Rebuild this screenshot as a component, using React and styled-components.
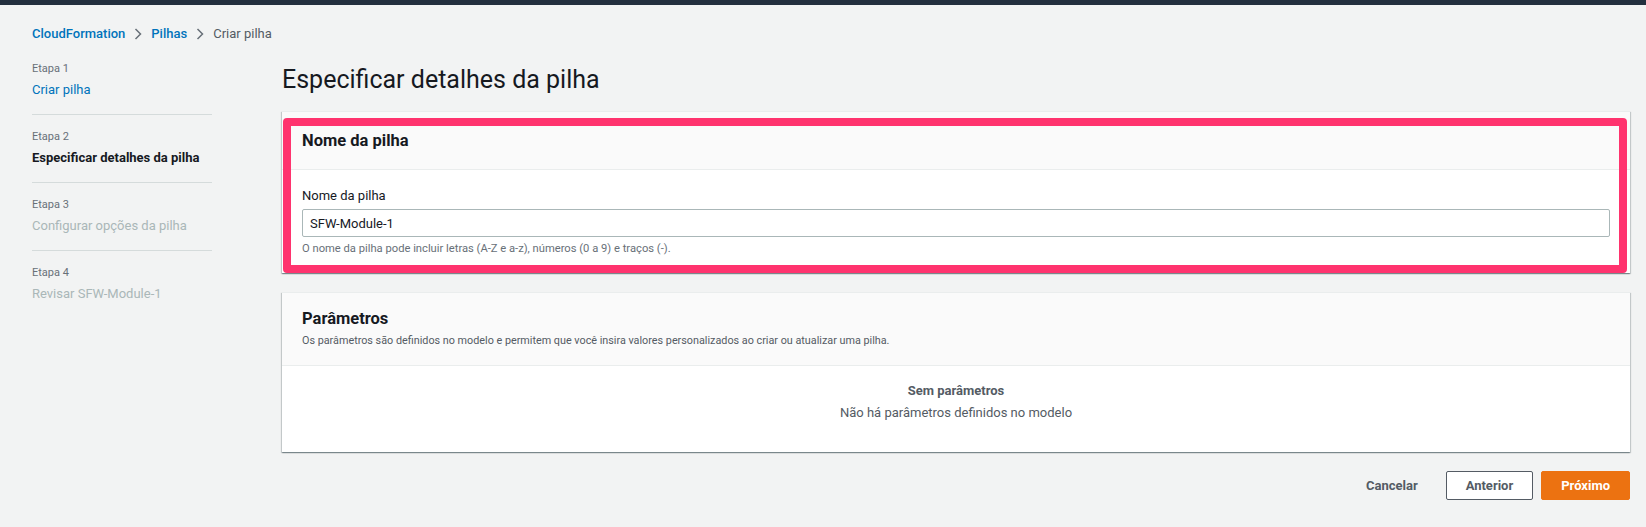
import React from "react"
import styled, { createGlobalStyle } from "styled-components"

const COLORS = {
  page: "#f2f3f3",
  ink: "#16191f",
  muted: "#687078",
  faded: "#aab7b8",
  link: "#0073bb",
  line: "#eaeded",
  navLine: "#d5dbdb",
  header: "#fafafa",
  orange: "#ec7211",
  grey: "#545b64",
  highlight: "#ff336e",
}

const GlobalStyle = createGlobalStyle`
  html, body {
    margin: 0;
    padding: 0;
    background: ${COLORS.page};
  }
  body {
    font-family: Roboto, "Liberation Sans", Arial, sans-serif;
    color: ${COLORS.ink};
    -webkit-font-smoothing: antialiased;
  }
  * { box-sizing: border-box; }
`

const TopBar = styled.div`
  height: 5px;
  background: #232f3e;
`

const Page = styled.div`
  padding: 19px 16px 20px 32px;
`

const Breadcrumbs = styled.nav`
  display: flex;
  align-items: center;
  height: 20px;
  font-size: 13px;
  line-height: 20px;
`

const Crumb = styled.span`
  color: ${({ current }) => (current ? COLORS.grey : COLORS.link)};
  font-weight: ${({ current }) => (current ? 400 : 500)};
`

const Chevron = styled.svg`
  width: 8px;
  height: 12px;
  margin: 0 9px;
  display: block;
`

const Layout = styled.div`
  display: grid;
  grid-template-columns: 180px 1fr;
  column-gap: 70px;
`

const StepNav = styled.ol`
  list-style: none;
  margin: 0;
  padding: 3px 0 0;
`

const Step = styled.li`
  padding: 14px 0;
  border-bottom: ${({ last }) => (last ? "none" : `1px solid ${COLORS.navLine}`)};
`

const StepLabel = styled.div`
  font-size: 11px;
  line-height: 16px;
  color: ${COLORS.muted};
`

const StepTitle = styled.div`
  margin-top: 3px;
  font-size: 13px;
  line-height: 20px;
  ${({ state }) =>
    state === "done"
      ? `color: ${COLORS.link};`
      : state === "active"
      ? `color: ${COLORS.ink}; font-weight: 700;`
      : `color: ${COLORS.faded};`}
`

const Main = styled.main`
  min-width: 0;
`

const Title = styled.h1`
  margin: 20px 0 15px;
  font-size: 25px;
  line-height: 32px;
  font-weight: 400;
  color: ${COLORS.ink};
`

const CardWrap = styled.div`
  position: relative;
  margin-bottom: 19px;
`

const Card = styled.section`
  background: #fff;
  border-top: 1px solid ${COLORS.line};
  box-shadow: 0 1px 1px 0 rgba(0, 28, 36, 0.3),
    1px 1px 1px 0 rgba(0, 28, 36, 0.15), -1px 1px 1px 0 rgba(0, 28, 36, 0.15);
`

const CardHeader = styled.header`
  background: ${COLORS.header};
  border-bottom: 1px solid ${COLORS.line};
  padding: ${({ compact }) => (compact ? "16px 20px" : "19px 20px 18px")};
`

const CardTitle = styled.h2`
  margin: 0;
  font-size: 16.5px;
  line-height: 20px;
  font-weight: 700;
`

const CardDesc = styled.p`
  margin: 4px 0 0;
  font-size: 10.8px;
  line-height: 16px;
  color: ${COLORS.grey};
`

const CardBody = styled.div`
  padding: 16px 20px 16px;
`

const Label = styled.label`
  display: block;
  font-size: 13px;
  line-height: 20px;
  margin-bottom: 3px;
`

const Input = styled.input`
  display: block;
  width: 100%;
  height: 28px;
  padding: 0 7px;
  border: 1px solid ${COLORS.faded};
  border-radius: 2px;
  font: inherit;
  font-size: 13px;
  color: ${COLORS.ink};
  background: #fff;
  outline: none;
`

const Hint = styled.div`
  margin-top: 4px;
  font-size: 11.2px;
  line-height: 16px;
  color: ${COLORS.muted};
`

const Highlight = styled.div`
  position: absolute;
  left: 1px;
  top: 7px;
  right: 3px;
  bottom: 0;
  border: 8px solid ${COLORS.highlight};
  border-radius: 4px;
  pointer-events: none;
`

const Empty = styled.div`
  padding: 15px 20px 29px;
  text-align: center;
  font-size: 13px;
  line-height: 20px;
  color: ${COLORS.grey};

  b {
    display: block;
    margin-bottom: 2px;
  }
`

const Actions = styled.div`
  display: flex;
  justify-content: flex-end;
  gap: 8px;
`

const Button = styled.button`
  height: 29px;
  padding: 0 19px;
  border-radius: 2px;
  font-family: inherit;
  font-size: 13px;
  font-weight: 700;
  cursor: pointer;
  ${({ variant }) =>
    variant === "primary"
      ? `background: ${COLORS.orange}; border: 1px solid ${COLORS.orange}; color: #fff;`
      : variant === "link"
      ? `background: transparent; border: 1px solid transparent; color: ${COLORS.grey};`
      : `background: #fff; border: 1px solid ${COLORS.grey}; color: ${COLORS.grey};`}
`

const steps = [
  { label: "Etapa 1", title: "Criar pilha", state: "done" },
  { label: "Etapa 2", title: "Especificar detalhes da pilha", state: "active" },
  { label: "Etapa 3", title: "Configurar opções da pilha", state: "todo" },
  { label: "Etapa 4", title: "Revisar SFW-Module-1", state: "todo" },
]

function Sep() {
  return (
    <Chevron viewBox="0 0 8 12">
      <polyline
        points="1.5,1 6.5,6 1.5,11"
        fill="none"
        stroke={COLORS.muted}
        strokeWidth="1.5"
      />
    </Chevron>
  )
}

export default function App() {
  return (
    <>
      <GlobalStyle />
      <TopBar />
      <Page>
        <Breadcrumbs>
          <Crumb>CloudFormation</Crumb>
          <Sep />
          <Crumb>Pilhas</Crumb>
          <Sep />
          <Crumb current>Criar pilha</Crumb>
        </Breadcrumbs>
        <Layout>
          <StepNav>
            {steps.map((s, i) => (
              <Step key={s.label} last={i === steps.length - 1}>
                <StepLabel>{s.label}</StepLabel>
                <StepTitle state={s.state}>{s.title}</StepTitle>
              </Step>
            ))}
          </StepNav>
          <Main>
            <Title>Especificar detalhes da pilha</Title>
            <CardWrap>
              <Card>
                <CardHeader>
                  <CardTitle>Nome da pilha</CardTitle>
                </CardHeader>
                <CardBody>
                  <Label htmlFor="stack-name">Nome da pilha</Label>
                  <Input id="stack-name" defaultValue="SFW-Module-1" />
                  <Hint>
                    O nome da pilha pode incluir letras (A-Z e a-z), números (0 a 9) e
                    traços (-).
                  </Hint>
                </CardBody>
              </Card>
              <Highlight />
            </CardWrap>
            <CardWrap>
              <Card>
                <CardHeader compact>
                  <CardTitle>Parâmetros</CardTitle>
                  <CardDesc>
                    Os parâmetros são definidos no modelo e permitem que você insira
                    valores personalizados ao criar ou atualizar uma pilha.
                  </CardDesc>
                </CardHeader>
                <Empty>
                  <b>Sem parâmetros</b>
                  Não há parâmetros definidos no modelo
                </Empty>
              </Card>
            </CardWrap>
            <Actions>
              <Button variant="link">Cancelar</Button>
              <Button>Anterior</Button>
              <Button variant="primary">Próximo</Button>
            </Actions>
          </Main>
        </Layout>
      </Page>
    </>
  )
}
